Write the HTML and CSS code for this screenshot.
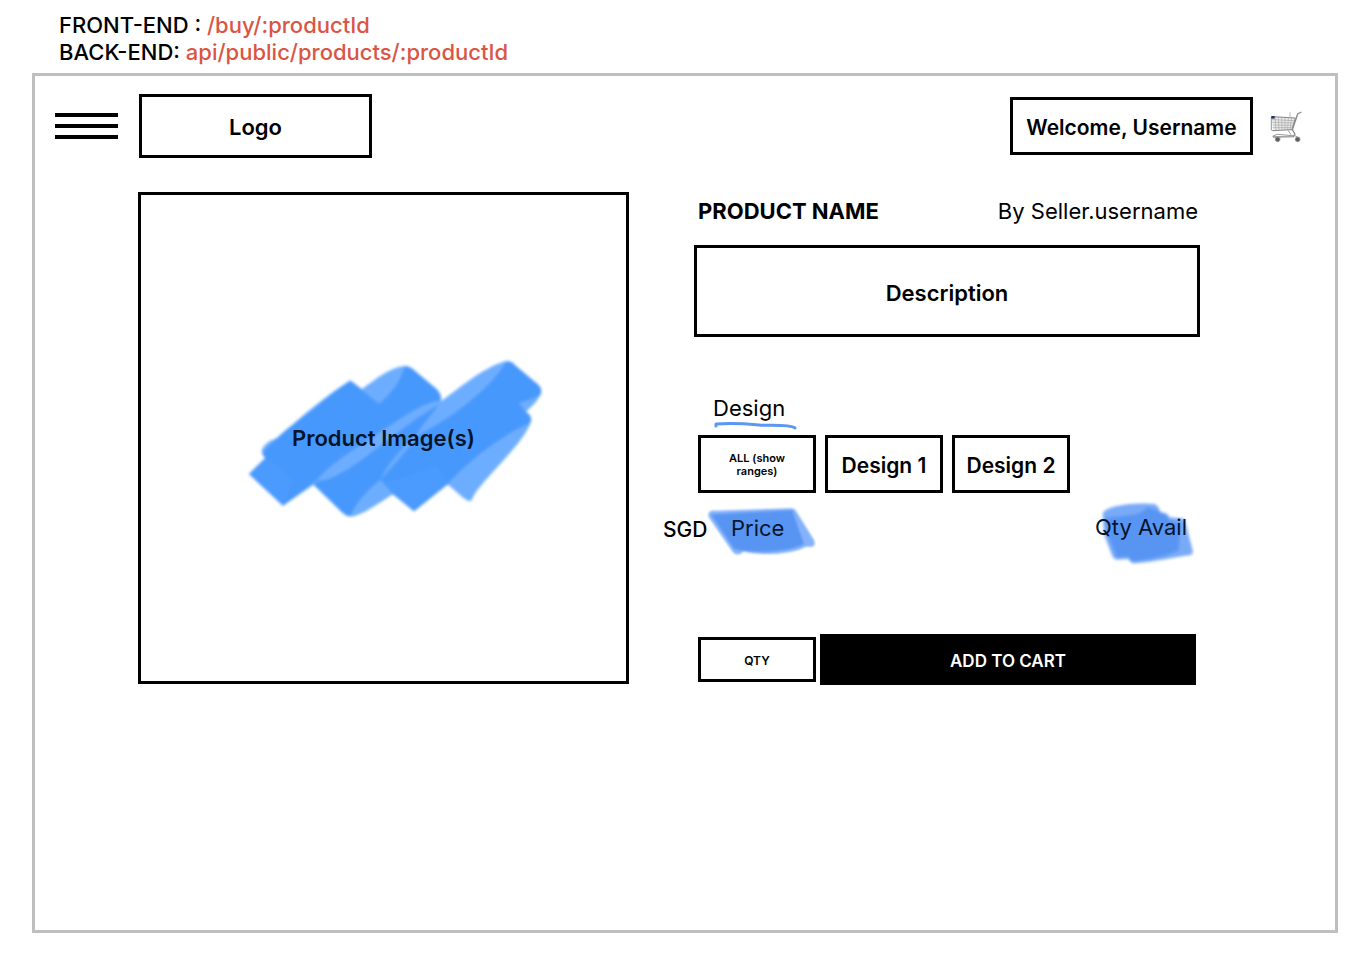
FILE: index.html
```html
<!DOCTYPE html>
<html lang="en">
<head>
<meta charset="utf-8">
<meta name="viewport" content="width=device-width, initial-scale=1">
<title>Product page wireframe</title>
<link rel="stylesheet" href="styles.css">
</head>
<body>
<div class="routes">
  <div>FRONT-END : <span class="route">/buy/:productId</span></div>
  <div>BACK-END: <span class="route">api/public/products/:productId</span></div>
</div>
<div class="frame">
  <header class="topbar">
    <button class="menu" type="button" aria-label="Menu"><span class="bar"></span><span class="bar"></span><span class="bar"></span></button>
    <a class="box logo" href="#">Logo</a>
    <a class="box welcome" href="#">Welcome, Username</a>
    <button class="cart" type="button" aria-label="Cart">
      <svg viewBox="0 0 96 96" width="32" height="32" fill="none">
        <path d="M5 17 L75 21 L66 56 L9 58 Z" fill="#ededed"/>
        <g stroke="#a5a5a5" stroke-width="2">
          <path d="M6 26L73 29M7 34L71 36M8 42L69 43M8 50L67 50"/>
          <path d="M15 17L18 57M25 18L27 57M35 18L36 57M45 19L45 57M55 20L53 56M65 20L60 56"/>
        </g>
        <path d="M9 59L66 56L76 21L8 17" stroke="#858585" stroke-width="3"/>
        <path d="M60 4V20" stroke="#bbb" stroke-width="3"/>
        <path d="M94 3L83 9L67 56L75 69L70 77L9 78" stroke="#898989" stroke-width="4" stroke-linejoin="round"/>
        <path d="M54 58L63 71M7 76L22 70L78 75L86 83" stroke="#999" stroke-width="3"/>
        <path d="M4 17V57L9 59" stroke="#999" stroke-width="3"/>
        <path d="M4 15h10v8H4z" fill="#24385f"/>
        <g fill="#615a5a" stroke="#9b9191" stroke-width="3"><circle cx="23" cy="85" r="7"/><circle cx="83" cy="85" r="7"/></g>
      </svg>
    </button>
  </header>
  <main class="product">
    <section class="photo">
      <svg class="scribble" viewBox="-69 0 999 525" aria-hidden="true">
        <defs><filter id="soft"><feGaussianBlur stdDeviation="4"/></filter></defs>
        <g filter="url(#soft)">
          <path fill="#6dadff" d="M27 369L76 321Q60 308 68 290Q88 264 124 258C180 195 260 134 331 88L366 114C410 82 450 48 497 44Q512 45 524 59L590 115Q608 132 603 151C670 101 740 43 802 29Q816 30 824 42L892 99Q908 112 902 130C893 150 875 168 858 182Q878 196 873 212C850 280 738 373 701 434Q696 450 687 451L670 441L623 400L522 481L459 430C420 454 377 486 340 496Q322 499 306 484L221 401L129 464Z"/>
          <path fill="#4698fc" d="M27 369L76 321Q62 306 74 298C130 240 165 215 220 175C260 140 295 112 331 90L417 158C455 128 484 87 492 48Q512 47 524 59L590 115Q606 132 599 149C540 155 450 226 380 270C320 310 260 350 229 389L129 464Z"/>
          <path fill="#4698fc" d="M221 401L235 389C285 390 360 330 420 285C490 232 540 193 599 160C580 184 552 216 531 249C490 289 440 340 422 386C385 413 348 455 331 496Q318 496 306 484Z"/>
          <path fill="#4698fc" d="M422 386C465 338 520 273 540 249C655 190 755 104 796 36Q812 26 824 42L892 99Q908 112 902 130C880 146 855 150 837 157L858 182Q878 196 870 216C790 250 690 325 623 400L522 481L459 430Z"/>
          <path fill="#5a9fff" opacity=".35" d="M100 335L160 388L130 462L30 370L76 322ZM590 345L625 399L522 480L430 400Z"/>
        </g>
      </svg>
      <span class="photo-label">Product Image(s)</span>
    </section>
    <section class="details">
      <div class="heading">
        <h1 class="name">PRODUCT NAME</h1>
        <span class="seller">By Seller.username</span>
      </div>
      <div class="box description">Description</div>
      <div class="designs">
        <h2 class="designs-title">Design</h2>
        <svg class="underline" viewBox="0 0 84 8" width="84" height="8" fill="none" stroke="#5b97f5" stroke-width="2" stroke-linecap="round" stroke-linejoin="round" aria-hidden="true"><path d="M3 4V2C20 1 35 2 46 3S76 2 82 6" stroke-width="3"/></svg>
        <div class="options">
          <button class="box option small" type="button">ALL (show ranges)</button>
          <button class="box option" type="button">Design 1</button>
          <button class="box option" type="button">Design 2</button>
        </div>
      </div>
      <div class="stock">
        <span class="currency">SGD</span>
        <span class="mark price">
          <svg class="mark-fill" viewBox="0 0 330 144" aria-hidden="true"><defs><filter id="edge"><feGaussianBlur stdDeviation="4"/></filter></defs><g filter="url(#edge)"><path fill="#84b2fa" d="M4 19Q6 7 24 8L252 1Q266 1 270 10L324 97Q330 117 316 117H299C260 140 160 146 111 132C98 145 85 143 77 132L5 27Z"/><path fill="#5895f3" d="M12 20L258 6L294 109C245 134 155 137 100 128L82 124Z"/></g></svg>
          <span class="mark-text">Price</span>
        </span>
        <span class="mark quantity">
          <svg class="mark-fill" viewBox="0 0 294 183" aria-hidden="true"><g filter="url(#edge)"><path fill="#78aaf7" d="M23 30C40 4 130 -2 178 3Q192 7 195 27L216 32L224 43L268 47L293 141Q295 156 282 157C240 162 180 177 120 181Q107 182 100 168L64 170Q55 168 52 159L27 94Z"/><path fill="#5895f3" d="M29 46C80 35 140 43 155 12L184 21L212 34L223 50L257 61L251 142C210 161 165 170 113 176L101 162L65 163L38 93Z"/></g></svg>
          <span class="mark-text">Qty Avail</span>
        </span>
      </div>
      <form class="purchase">
        <input class="box qty" type="text" value="QTY" aria-label="Quantity">
        <button class="add" type="button">ADD TO CART</button>
      </form>
    </section>
  </main>
</div>
</body>
</html>
```
FILE: styles.css
```css
*, *::before, *::after { box-sizing: border-box; }

body {
  display: flex;
  flex-direction: column;
  min-height: 100vh;
  margin: 0;
  padding: 12px 32px 25px;
  background: #fff;
  color: #000;
  font: 600 22px/27px Inter, "Liberation Sans", sans-serif;
}

button, input { font: inherit; color: inherit; border-radius: 0; }
button { cursor: pointer; }

.routes { padding: 0 27px 7px; font-weight: 550; }
.route { color: #d95645; }

.frame { flex: 1; border: 3px solid #bfbfbf; }

.box {
  display: flex;
  align-items: center;
  justify-content: center;
  padding: 2px 0 0;
  border: 3px solid #000;
  background: #fff;
  color: #000;
  text-align: center;
  text-decoration: none;
}

.topbar {
  display: flex;
  align-items: center;
  padding: 18px 33px 0 20px;
}
.menu {
  display: flex;
  flex-direction: column;
  gap: 7px;
  width: 63px;
  padding: 0;
  border: 0;
  background: none;
}
.bar { height: 4px; background: #000; }
.logo { width: 233px; height: 64px; margin-left: 21px; }
.welcome { width: 243px; height: 58px; margin-left: auto; font-size: 21px; }
.cart { margin-left: 17px; padding: 2px 0 0; border: 0; background: none; }
.cart svg { display: block; }

.product {
  display: grid;
  grid-template-columns: 491fr 537fr;
  gap: 34px;
  align-items: start;
  padding: 34px 135px 34px 103px;
}

.photo {
  display: grid;
  place-items: center;
  aspect-ratio: 491 / 492;
  border: 3px solid #000;
}
.scribble, .photo-label { grid-area: 1 / 1; }
.scribble { width: 333px; max-width: 100%; }
.photo-label { z-index: 1; color: #06142b; }

.heading {
  display: flex;
  align-items: center;
  justify-content: space-between;
  height: 38px;
  padding: 0 2px 0 35px;
}
.name { margin: 0; font-size: 22px; font-weight: 700; }
.seller { font-weight: 400; }
.description { height: 92px; margin: 15px 0 0 31px; padding-top: 4px; }

.designs { margin: 58px 0 0 35px; }
.designs-title { margin: 0 0 0 15px; font-size: 22px; font-weight: 400; }
.underline { display: block; margin: 0 0 5px 15px; }
.options { display: flex; gap: 9px; }
.option { width: 118px; height: 58px; font-size: 21px; }
.small { padding: 2px 24px 0; font-size: 11px; line-height: 13px; }

.stock {
  display: flex;
  align-items: flex-start;
  height: 61px;
  margin-top: 10px;
  padding-right: 7px;
  font-weight: 400;
}
.currency { width: 44px; padding-top: 13px; font-size: 21px; font-weight: 500; }
.mark { display: grid; color: #06142b; }
.mark-fill, .mark-text { grid-area: 1 / 1; }
.mark-fill { width: 100%; overflow: visible; }
.mark-text { z-index: 1; }
.price { width: 109px; margin-top: 5px; }
.price .mark-text { padding: 7px 0 0 24px; }
.quantity { width: 98px; margin-left: auto; }
.quantity .mark-text { padding-top: 11px; white-space: nowrap; }

.purchase { display: flex; align-items: center; gap: 4px; margin: 70px 4px 0 35px; }
.qty { width: 118px; height: 45px; font-size: 12px; }
.add {
  flex: 1;
  height: 51px;
  padding: 3px 0 0;
  border: 0;
  background: #000;
  color: #fff;
  font-size: 17px;
}
```
